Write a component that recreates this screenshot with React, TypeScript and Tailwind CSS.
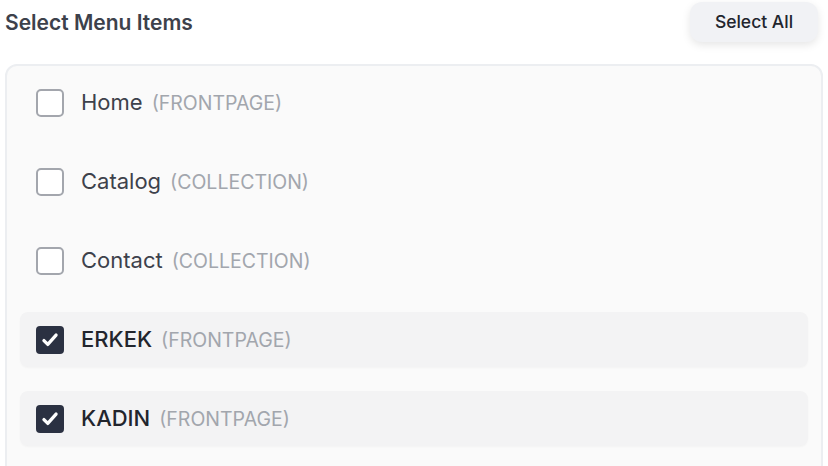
import React, { useState } from "react";

type MenuItem = {
  id: string;
  title: string;
  type: string;
};

const items: MenuItem[] = [
  { id: "home", title: "Home", type: "FRONTPAGE" },
  { id: "catalog", title: "Catalog", type: "COLLECTION" },
  { id: "contact", title: "Contact", type: "COLLECTION" },
  { id: "erkek", title: "ERKEK", type: "FRONTPAGE" },
  { id: "kadin", title: "KADIN", type: "FRONTPAGE" },
];

function CheckBox({ checked }: { checked: boolean }) {
  if (checked) {
    return (
      <span className="flex h-[28px] w-[28px] shrink-0 items-center justify-center rounded-[4px] bg-[#2b3142]">
        <svg width="22" height="22" viewBox="0 0 20 20" fill="none">
          <path d="M4.5 10.5l3.5 3.5 7.5-8.5" stroke="#fff" strokeWidth="3" strokeLinecap="round" strokeLinejoin="round" />
        </svg>
      </span>
    );
  }
  return <span className="h-[28px] w-[28px] shrink-0 rounded-[5px] border-2 border-[#a3a6ad] bg-white" />;
}

export default function App() {
  const [selected, setSelected] = useState<string[]>(["erkek", "kadin"]);

  const toggle = (id: string) =>
    setSelected((s) => (s.includes(id) ? s.filter((x) => x !== id) : [...s, id]));

  return (
    <div className="min-h-screen bg-white px-[5px] pt-[8px]" style={{ fontFamily: "Inter, 'Noto Sans', sans-serif" }}>
      <div className="flex items-center justify-between pr-[5px]">
        <h2 className="-mt-[5px] text-[21px] font-semibold text-[#3d414b]">Select Menu Items</h2>
        <button
          onClick={() => setSelected(items.map((i) => i.id))}
          className="-mt-[6px] h-[40px] w-[128px] rounded-[12px] bg-[#f1f2f5] text-[17.5px] font-medium text-[#22252d] shadow-[0_3px_8px_rgba(0,0,0,0.10)]"
        >
          Select All
        </button>
      </div>

      <div className="mt-[22px] rounded-[12px] border-2 border-[#eceef1] bg-[#fafafa] px-[13px] pt-[9px] pb-10">
        <div className="flex flex-col gap-[24px]">
          {items.map((item) => {
            const on = selected.includes(item.id);
            return (
              <div
                key={item.id}
                onClick={() => toggle(item.id)}
                className={`flex h-[55px] cursor-pointer items-center gap-[17px] rounded-[8px] pl-[16px] ${
                  on ? "bg-[#f3f3f4] shadow-[0_1px_2px_rgba(0,0,0,0.03)]" : ""
                }`}
              >
                <CheckBox checked={on} />
                <span className={`text-[22px] ${on ? "font-medium text-[#22252d]" : "text-[#3d414b]"}`}>
                  {item.title}
                  <span className="ml-[9px] text-[19.5px] font-normal text-[#a2a6ad]">({item.type})</span>
                </span>
              </div>
            );
          })}
        </div>
      </div>
    </div>
  );
}
